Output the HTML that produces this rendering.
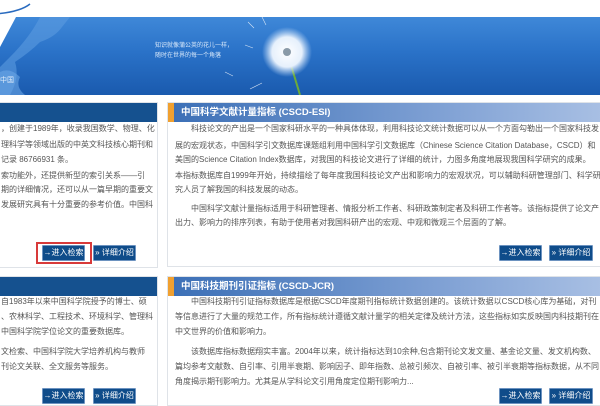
<!DOCTYPE html>
<html><head><meta charset="utf-8"><style>
*{margin:0;padding:0;box-sizing:border-box}
body{width:600px;height:400px;overflow:hidden;background:#fff;position:relative;font-family:"Liberation Sans","Noto Sans CJK SC",sans-serif;font-size:10px;color:#444}
.banner{position:absolute;left:0;top:17px;width:600px;height:78px;background:linear-gradient(180deg,#3f88d8 0%,#2a72c8 45%,#1a5aae 100%);overflow:hidden}
.abs{position:absolute}
.panel{position:absolute;border:1px solid #dfe3e8;background:#fff;overflow:hidden}
.hd{position:absolute;left:0;top:0;height:19px;width:100%;color:#fff;font-weight:bold;font-size:9.5px;line-height:19px}
.ln{position:absolute;white-space:nowrap;line-height:14px;font-size:8px;color:#555}
.btn{position:absolute;height:16px;background:#0f4c8a;border:1px solid #6d93c0;color:#fff;font-size:8px;line-height:14px;text-align:center;border-radius:1px;white-space:nowrap}
</style></head><body>
<svg class="abs" style="left:0;top:0" width="40" height="17"><path d="M-5 14 Q20 12 30 4" stroke="#2a6bbf" stroke-width="1.5" fill="none"/></svg>
<div class="banner">
<svg width="600" height="78" style="position:absolute;left:0;top:0">
<defs><radialGradient id="d" cx="0.5" cy="0.5" r="0.5"><stop offset="0" stop-color="#fff"/><stop offset="0.6" stop-color="#e6f0fc"/><stop offset="1" stop-color="#bcd6f4" stop-opacity="0"/></radialGradient></defs>
<path d="M0 0 L16 0 L0 30 Z" fill="#fff"/>
<path d="M10 78 Q20 60 15 45 Q30 35 40 25 Q55 20 62 10 L70 0 L40 0 Q30 20 10 40 L0 50 L0 78Z" fill="#5c9be0" opacity="0.6"/>
<path d="M0 78 L0 55 Q10 50 20 60 Q15 70 25 78Z" fill="#6aa6e6" opacity="0.6"/>
<line x1="291" y1="48" x2="300" y2="78" stroke="#6cab3a" stroke-width="2"/>
<circle cx="287" cy="35" r="25" fill="url(#d)"/>
<circle cx="287" cy="35" r="4" fill="#8a9aa8"/>
<g stroke="#fff" stroke-width="0.6" opacity="0.8"><path d="M248 5 l6 6 M245 28 l8 3 M250 72 l12 -6 M225 55 l8 4 M262 0 l4 8"/></g>
<text x="155" y="30" font-size="6" fill="#d8e8fa">知识就像蒲公英的花儿一样，</text>
<text x="155" y="40" font-size="6" fill="#d8e8fa">随时在世界的每一个角落</text>
<text x="0" y="65" font-size="7" fill="#e0ecfa">中国</text>
</svg>
</div>

<div class="panel" style="left:-2px;top:102px;width:160px;height:166px;">
<div class="hd" style="background:#15518f"></div>
<div class="ln" style="left:2px;top:19px">，创建于1989年，收录我国数学、物理、化</div>
<div class="ln" style="left:2px;top:35px">理科学等领域出版的中英文科技核心期刊和</div>
<div class="ln" style="left:2px;top:50px">记录 86766931 条。</div>
<div class="ln" style="left:2px;top:66px">索功能外，还提供新型的索引关系——引</div>
<div class="ln" style="left:2px;top:80px">期的详细情况，还可以从一篇早期的重要文</div>
<div class="ln" style="left:2px;top:95px">发展研究具有十分重要的参考价值。中国科</div>
</div>
<div style="position:absolute;left:36px;top:242px;width:56px;height:22px;border:2px solid #d83a3a"></div>
<div class="btn" style="left:42px;top:245px;width:43px">→进入检索</div>
<div class="btn" style="left:93px;top:245px;width:43px">» 详细介绍</div>

<div class="panel" style="left:167px;top:102px;width:440px;height:165px;">
<div class="hd" style="background:linear-gradient(90deg,#3b6fb6,#7d9fd3 60%,#a9c0e4)"><span style="display:inline-block;width:6px;height:19px;background:#f0a030;vertical-align:top"></span><span style="margin-left:7px">中国科学文献计量指标 (CSCD-ESI)</span></div>
<div class="ln" style="left:7px;top:19px">　　科技论文的产出是一个国家科研水平的一种具体体现，利用科技论文统计数据可以从一个方面勾勒出一个国家科技发</div>
<div class="ln" style="left:7px;top:36px">展的宏观状态，中国科学引文数据库课题组利用中国科学引文数据库（Chinese Science Citation Database，CSCD）和</div>
<div class="ln" style="left:7px;top:50px">美国的Science Citation Index数据库，对我国的科技论文进行了详细的统计，力图多角度地展现我国科学研究的成果。</div>
<div class="ln" style="left:7px;top:66px">本指标数据库自1999年开始，持续描绘了每年度我国科技论文产出和影响力的宏观状况，可以辅助科研管理部门、科学研</div>
<div class="ln" style="left:7px;top:80px">究人员了解我国的科技发展的动态。</div>
<div class="ln" style="left:7px;top:99px">　　中国科学文献计量指标适用于科研管理者、情报分析工作者、科研政策制定者及科研工作者等。该指标提供了论文产</div>
<div class="ln" style="left:7px;top:113px">出力、影响力的排序列表，有助于使用者对我国科研产出的宏观、中观和微观三个层面的了解。</div>
</div>
<div class="btn" style="left:499px;top:245px;width:43px">→进入检索</div>
<div class="btn" style="left:549px;top:245px;width:44px">» 详细介绍</div>

<div class="panel" style="left:-2px;top:276px;width:160px;height:130px;">
<div class="hd" style="background:#15518f"></div>
<div class="ln" style="left:2px;top:18px">自1983年以来中国科学院授予的博士、硕</div>
<div class="ln" style="left:2px;top:33px">、农林科学、工程技术、环境科学、管理科</div>
<div class="ln" style="left:2px;top:48px">中国科学院学位论文的重要数据库。</div>
<div class="ln" style="left:2px;top:68px">文检索、中国科学院大学培养机构与教师</div>
<div class="ln" style="left:2px;top:83px">刊论文关联、全文服务等服务。</div>
</div>
<div class="btn" style="left:42px;top:388px;width:43px">→进入检索</div>
<div class="btn" style="left:93px;top:388px;width:43px">» 详细介绍</div>

<div class="panel" style="left:167px;top:276px;width:440px;height:130px;">
<div class="hd" style="background:linear-gradient(90deg,#3b6fb6,#7d9fd3 60%,#a9c0e4)"><span style="display:inline-block;width:6px;height:19px;background:#f0a030;vertical-align:top"></span><span style="margin-left:7px">中国科技期刊引证指标 (CSCD-JCR)</span></div>
<div class="ln" style="left:7px;top:18px">　　中国科技期刊引证指标数据库是根据CSCD年度期刊指标统计数据创建的。该统计数据以CSCD核心库为基础，对刊</div>
<div class="ln" style="left:7px;top:33px">等信息进行了大量的规范工作，所有指标统计遵循文献计量学的相关定律及统计方法，这些指标如实反映国内科技期刊在</div>
<div class="ln" style="left:7px;top:48px">中文世界的价值和影响力。</div>
<div class="ln" style="left:7px;top:68px">　　该数据库指标数据翔实丰富。2004年以来，统计指标达到10余种,包含期刊论文发文量、基金论文量、发文机构数、</div>
<div class="ln" style="left:7px;top:83px">篇均参考文献数、自引率、引用半衰期、影响因子、即年指数、总被引频次、自被引率、被引半衰期等指标数据，从不同</div>
<div class="ln" style="left:7px;top:98px">角度揭示期刊影响力。尤其是从学科论文引用角度定位期刊影响力...</div>
</div>
<div class="btn" style="left:499px;top:388px;width:43px">→进入检索</div>
<div class="btn" style="left:549px;top:388px;width:44px">» 详细介绍</div>
</body></html>
